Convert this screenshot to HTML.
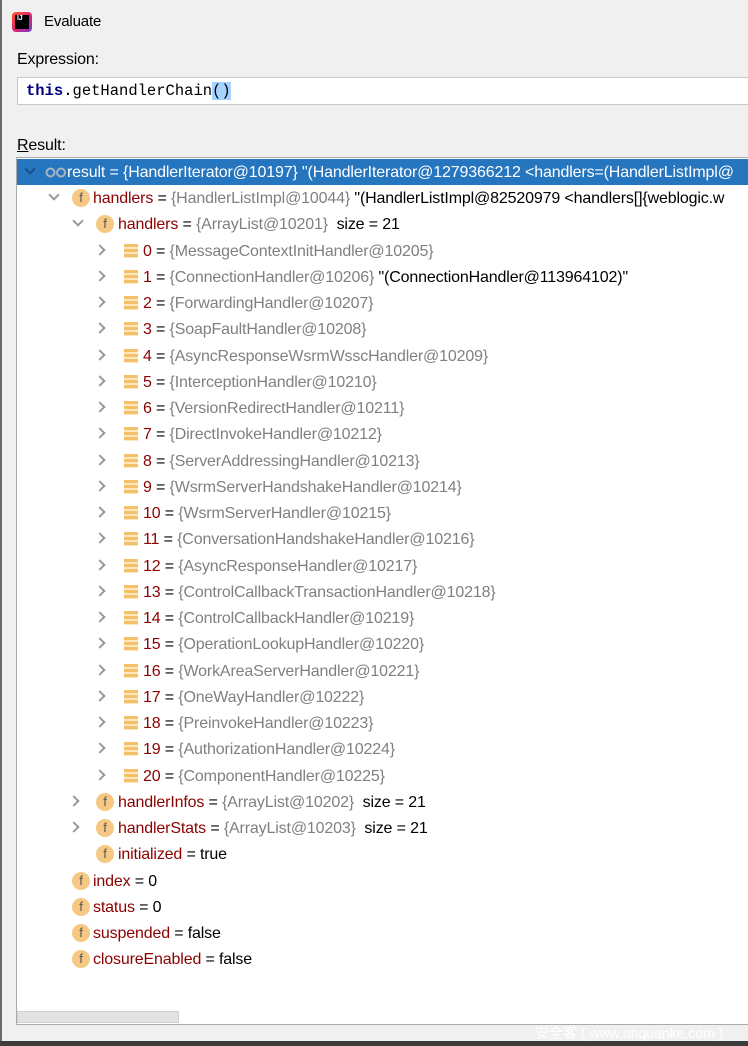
<!DOCTYPE html>
<html><head><meta charset="utf-8"><style>
*{margin:0;padding:0;box-sizing:border-box}
body{width:748px;height:1046px;overflow:hidden;background:#f0f0f0;font-family:"Liberation Sans","DejaVu Sans",sans-serif;font-size:16px;letter-spacing:-0.15px;color:#000;position:relative}
.lb{position:absolute;left:0;top:0;width:2px;height:1046px;background:#6a6a6a}
.title{position:absolute;left:44px;top:13px;font-size:15px}
.logo{position:absolute;left:12px;top:12px;width:20px;height:20px;border-radius:4px;background:linear-gradient(135deg,#fc5b2a,#e5226c,#6b3bd8)}
.logo i{position:absolute;left:3px;top:3px;width:14px;height:14px;background:#000}
.logo b{position:absolute;left:5px;top:3px;color:#fff;font-size:7px;font-weight:bold;font-style:normal}
.lbl{position:absolute;left:17px;font-size:16px}
.inp{position:absolute;left:17px;top:77px;width:740px;height:28px;background:#fff;border:1px solid #c8c8c8;font-family:"Liberation Mono","DejaVu Sans Mono",monospace;font-size:15.5px;letter-spacing:0;padding:4px 0 0 8px}
.kw{color:#000080;font-weight:bold}
.sel{background:#a6d2ff}
.tree{position:absolute;left:16px;top:157px;width:740px;height:868px;background:#fff;border:1px solid #aaa}
.row{position:absolute;left:0;height:26px;white-space:nowrap;line-height:27px;width:740px}
.row.s{background:#2675bf;color:#fff}
.chev{position:absolute;top:8px;width:8px;height:8px;border-right:2px solid #999;border-bottom:2px solid #999}
.dn{transform:rotate(45deg);top:6px}
.rt{transform:rotate(-45deg)}
.f{position:absolute;top:4px;width:18px;height:18px;border-radius:50%;background:#f6c883;color:#555;font-size:13px;line-height:18px;text-align:center;letter-spacing:0}
.l{position:absolute;top:6px;width:14px;height:14px;background:repeating-linear-gradient(#f4c06a 0 3px,#fde7bf 3px 5px)}
.t{position:absolute;top:0}
.n{color:#8b0000}
.g{color:#808080}
.s .n,.s .g{color:#fff}
</style></head><body>
<div class="lb"></div>
<div class="logo"><i></i><b>IJ</b></div>
<div class="title">Evaluate</div>
<div class="lbl" style="top:51px">Expression:</div>
<div class="inp"><span class="kw">this</span>.getHandlerChain<span class="sel">()</span></div>
<div class="lbl" style="top:137px"><u>R</u>esult:</div>
<div class="tree">
<div class="row s" style="top:1px"><div class="chev dn" style="left:9px;border-color:#1d4f86"></div>
<svg style="position:absolute;left:28px;top:8px" width="22" height="11"><circle cx="5.5" cy="5.5" r="4" fill="none" stroke="#a8b4c0" stroke-width="2"/><circle cx="16" cy="5.5" r="4" fill="none" stroke="#a8b4c0" stroke-width="2"/></svg>
<span class="t" style="left:50px">result = {HandlerIterator@10197} "(HandlerIterator@1279366212 &lt;handlers=(HandlerListImpl@</span></div>
<div class="row" style="top:27px"><div class="chev dn" style="left:33px"></div><div class="f" style="left:55px">f</div><span class="t" style="left:76px"><span class="n">handlers</span> = <span class="g">{HandlerListImpl@10044}</span> "(HandlerListImpl@82520979 &lt;handlers[]{weblogic.w</span></div>
<div class="row" style="top:53px"><div class="chev dn" style="left:57px"></div><div class="f" style="left:79px">f</div><span class="t" style="left:101px"><span class="n">handlers</span> = <span class="g">{ArrayList@10201}</span>&nbsp; size = 21</span></div>
<div class="row" style="top:80px"><div class="chev rt" style="left:79px"></div><div class="l" style="left:107px"></div><span class="t" style="left:126px"><span class="n">0</span> = <span class="g">{MessageContextInitHandler@10205}</span></span></div>
<div class="row" style="top:106px"><div class="chev rt" style="left:79px"></div><div class="l" style="left:107px"></div><span class="t" style="left:126px"><span class="n">1</span> = <span class="g">{ConnectionHandler@10206}</span> "(ConnectionHandler@113964102)"</span></div>
<div class="row" style="top:132px"><div class="chev rt" style="left:79px"></div><div class="l" style="left:107px"></div><span class="t" style="left:126px"><span class="n">2</span> = <span class="g">{ForwardingHandler@10207}</span></span></div>
<div class="row" style="top:158px"><div class="chev rt" style="left:79px"></div><div class="l" style="left:107px"></div><span class="t" style="left:126px"><span class="n">3</span> = <span class="g">{SoapFaultHandler@10208}</span></span></div>
<div class="row" style="top:185px"><div class="chev rt" style="left:79px"></div><div class="l" style="left:107px"></div><span class="t" style="left:126px"><span class="n">4</span> = <span class="g">{AsyncResponseWsrmWsscHandler@10209}</span></span></div>
<div class="row" style="top:211px"><div class="chev rt" style="left:79px"></div><div class="l" style="left:107px"></div><span class="t" style="left:126px"><span class="n">5</span> = <span class="g">{InterceptionHandler@10210}</span></span></div>
<div class="row" style="top:237px"><div class="chev rt" style="left:79px"></div><div class="l" style="left:107px"></div><span class="t" style="left:126px"><span class="n">6</span> = <span class="g">{VersionRedirectHandler@10211}</span></span></div>
<div class="row" style="top:263px"><div class="chev rt" style="left:79px"></div><div class="l" style="left:107px"></div><span class="t" style="left:126px"><span class="n">7</span> = <span class="g">{DirectInvokeHandler@10212}</span></span></div>
<div class="row" style="top:290px"><div class="chev rt" style="left:79px"></div><div class="l" style="left:107px"></div><span class="t" style="left:126px"><span class="n">8</span> = <span class="g">{ServerAddressingHandler@10213}</span></span></div>
<div class="row" style="top:316px"><div class="chev rt" style="left:79px"></div><div class="l" style="left:107px"></div><span class="t" style="left:126px"><span class="n">9</span> = <span class="g">{WsrmServerHandshakeHandler@10214}</span></span></div>
<div class="row" style="top:342px"><div class="chev rt" style="left:79px"></div><div class="l" style="left:107px"></div><span class="t" style="left:126px"><span class="n">10</span> = <span class="g">{WsrmServerHandler@10215}</span></span></div>
<div class="row" style="top:368px"><div class="chev rt" style="left:79px"></div><div class="l" style="left:107px"></div><span class="t" style="left:126px"><span class="n">11</span> = <span class="g">{ConversationHandshakeHandler@10216}</span></span></div>
<div class="row" style="top:395px"><div class="chev rt" style="left:79px"></div><div class="l" style="left:107px"></div><span class="t" style="left:126px"><span class="n">12</span> = <span class="g">{AsyncResponseHandler@10217}</span></span></div>
<div class="row" style="top:421px"><div class="chev rt" style="left:79px"></div><div class="l" style="left:107px"></div><span class="t" style="left:126px"><span class="n">13</span> = <span class="g">{ControlCallbackTransactionHandler@10218}</span></span></div>
<div class="row" style="top:447px"><div class="chev rt" style="left:79px"></div><div class="l" style="left:107px"></div><span class="t" style="left:126px"><span class="n">14</span> = <span class="g">{ControlCallbackHandler@10219}</span></span></div>
<div class="row" style="top:473px"><div class="chev rt" style="left:79px"></div><div class="l" style="left:107px"></div><span class="t" style="left:126px"><span class="n">15</span> = <span class="g">{OperationLookupHandler@10220}</span></span></div>
<div class="row" style="top:500px"><div class="chev rt" style="left:79px"></div><div class="l" style="left:107px"></div><span class="t" style="left:126px"><span class="n">16</span> = <span class="g">{WorkAreaServerHandler@10221}</span></span></div>
<div class="row" style="top:526px"><div class="chev rt" style="left:79px"></div><div class="l" style="left:107px"></div><span class="t" style="left:126px"><span class="n">17</span> = <span class="g">{OneWayHandler@10222}</span></span></div>
<div class="row" style="top:552px"><div class="chev rt" style="left:79px"></div><div class="l" style="left:107px"></div><span class="t" style="left:126px"><span class="n">18</span> = <span class="g">{PreinvokeHandler@10223}</span></span></div>
<div class="row" style="top:578px"><div class="chev rt" style="left:79px"></div><div class="l" style="left:107px"></div><span class="t" style="left:126px"><span class="n">19</span> = <span class="g">{AuthorizationHandler@10224}</span></span></div>
<div class="row" style="top:605px"><div class="chev rt" style="left:79px"></div><div class="l" style="left:107px"></div><span class="t" style="left:126px"><span class="n">20</span> = <span class="g">{ComponentHandler@10225}</span></span></div>
<div class="row" style="top:631px"><div class="chev rt" style="left:53px"></div><div class="f" style="left:79px">f</div><span class="t" style="left:101px"><span class="n">handlerInfos</span> = <span class="g">{ArrayList@10202}</span>&nbsp; size = 21</span></div>
<div class="row" style="top:657px"><div class="chev rt" style="left:53px"></div><div class="f" style="left:79px">f</div><span class="t" style="left:101px"><span class="n">handlerStats</span> = <span class="g">{ArrayList@10203}</span>&nbsp; size = 21</span></div>
<div class="row" style="top:683px"><div class="f" style="left:79px">f</div><span class="t" style="left:101px"><span class="n">initialized</span> = true</span></div>
<div class="row" style="top:710px"><div class="f" style="left:55px">f</div><span class="t" style="left:76px"><span class="n">index</span> = 0</span></div>
<div class="row" style="top:736px"><div class="f" style="left:55px">f</div><span class="t" style="left:76px"><span class="n">status</span> = 0</span></div>
<div class="row" style="top:762px"><div class="f" style="left:55px">f</div><span class="t" style="left:76px"><span class="n">suspended</span> = false</span></div>
<div class="row" style="top:788px"><div class="f" style="left:55px">f</div><span class="t" style="left:76px"><span class="n">closureEnabled</span> = false</span></div>
<div style="position:absolute;left:0;top:853px;width:162px;height:12px;background:#e2e2e2;border:1px solid #d0d0d0"></div>
</div>
<div style="position:absolute;left:535px;top:1023px;color:#fff;font-size:14px;letter-spacing:0;font-family:'Liberation Sans','Noto Sans CJK SC',sans-serif">安全客 ( www.anquanke.com )</div>
<div style="position:absolute;left:0;top:1041px;width:748px;height:5px;background:#3c3c3c"></div>
</body></html>
